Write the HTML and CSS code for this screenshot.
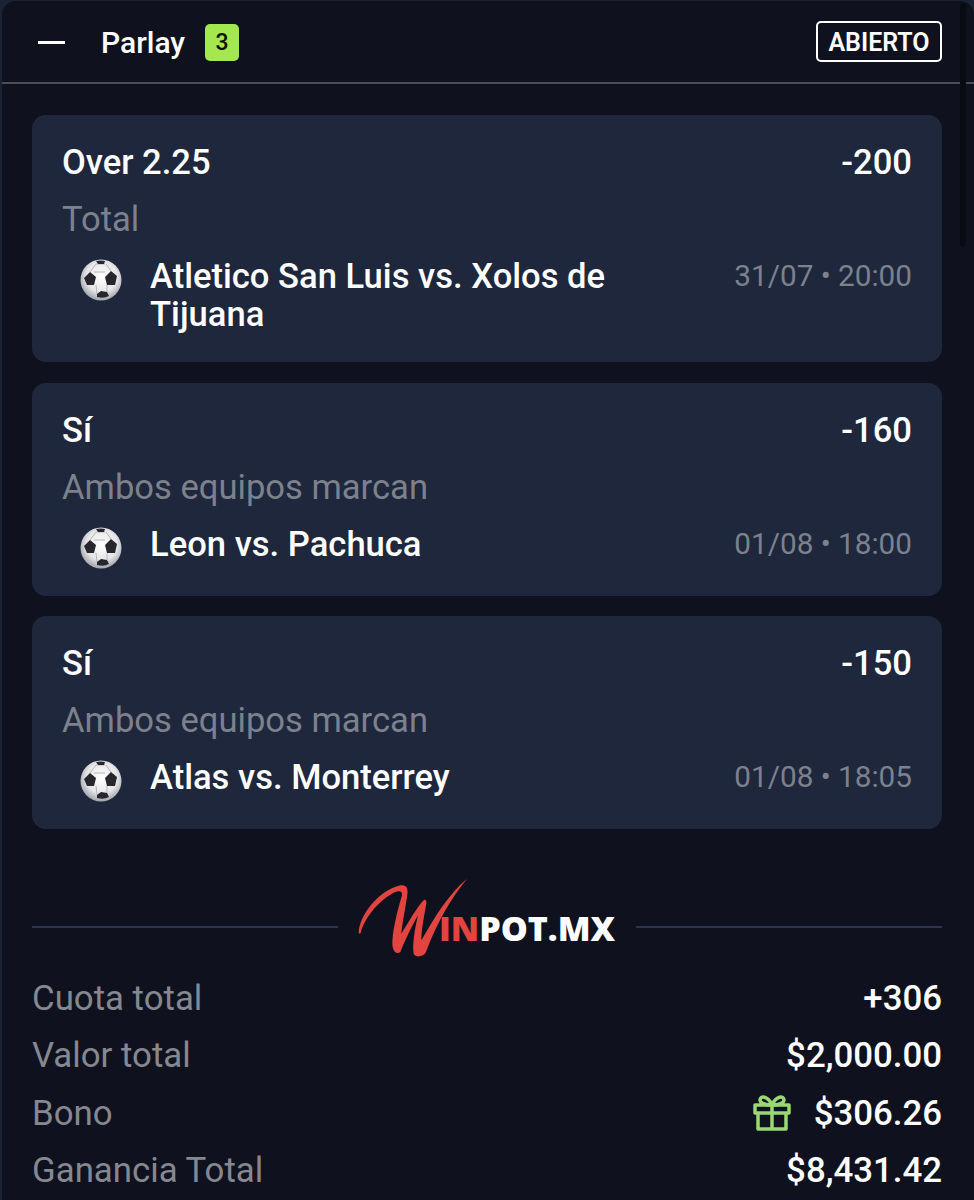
FILE: index.html
```html
<!DOCTYPE html>
<html lang="es">
<head>
  <meta charset="UTF-8" />
  <title>Parlay</title>
  <link rel="stylesheet" href="styles.css">
</head>
<body>
  <svg class="defs" width="0" height="0">
    <defs>
      <radialGradient id="ball-shade" cx="52%" cy="42%" r="58%">
        <stop offset="0" stop-color="#fff" />
        <stop offset="0.65" stop-color="#e6e6e8" />
        <stop offset="1" stop-color="#a2a4ab" />
      </radialGradient>
      <symbol id="ball" viewBox="0 0 42 42">
        <circle cx="21" cy="21" r="20.500" fill="url(#ball-shade)" />
        <path d="M16 5l-6 8M26 5l5 7M16 26l1 9M27 26l0 7M16 5h9M14 13h11" fill="none" stroke="#b4b6bc" stroke-width="1" />
        <path d="M10 13l6 5-2 8H7l-3-7zM31 12l6 5-2 9h-8l-2-8zM17 35l4-3 6 1 2 4q-5 3-12 1zM16 2q5-1 9 0l-1 3h-6z" fill="#26262c" />
      </symbol>
    </defs>
  </svg>

  <div class="panel">
    <div class="scrollbar"></div>

    <header class="panel-head">
      <span class="collapse"></span>
      <span class="panel-title">Parlay</span>
      <span class="count">3</span>
      <span class="status">ABIERTO</span>
    </header>

    <div class="bets">
      <div class="bet">
        <div class="bet-top"><span>Over 2.25</span><span>-200</span></div>
        <div class="market">Total</div>
        <div class="game">
          <svg class="ball"><use href="#ball" /></svg>
          <div class="teams">Atletico San Luis vs. Xolos de Tijuana</div>
          <div class="date">31/07 • 20:00</div>
        </div>
      </div>

      <div class="bet">
        <div class="bet-top"><span>Sí</span><span>-160</span></div>
        <div class="market">Ambos equipos marcan</div>
        <div class="game">
          <svg class="ball"><use href="#ball" /></svg>
          <div class="teams">Leon vs. Pachuca</div>
          <div class="date">01/08 • 18:00</div>
        </div>
      </div>

      <div class="bet">
        <div class="bet-top"><span>Sí</span><span>-150</span></div>
        <div class="market">Ambos equipos marcan</div>
        <div class="game">
          <svg class="ball"><use href="#ball" /></svg>
          <div class="teams">Atlas vs. Monterrey</div>
          <div class="date">01/08 • 18:05</div>
        </div>
      </div>
    </div>

    <div class="brand">
      <span class="rule"></span>
      <div class="logo">
        <svg class="swash" width="120" height="90" viewBox="0 0 360 270">
          <path d="M20 182C22 130 80 55 145 40c20-3 25 10 20 35-7 45-15 85-17 110 22-35 47-80 67-100 7-5 10 3 7 15-7 40-14 75-14 105 37-65 82-140 137-185-45 55-90 130-123 220-7 15-32 18-37 5-5-30 5-80 13-115-23 40-43 85-53 110-10 8-20 0-23-15-4-35 13-105 28-155 2-15-10-15-25-8C90 80 45 125 28 175c-1 10-6 13-8 7z" fill="#e2443f" />
        </svg>
        <span class="logo-in">IN</span><span class="logo-pot">POT.MX</span>
      </div>
      <span class="rule"></span>
    </div>

    <div class="totals">
      <div class="total-row"><span class="total-label">Cuota total</span><span>+306</span></div>
      <div class="total-row"><span class="total-label">Valor total</span><span>$2,000.00</span></div>
      <div class="total-row">
        <span class="total-label">Bono</span>
        <span class="bonus">
          <svg class="gift" width="38" height="38" viewBox="0 0 38 38" fill="none" stroke="#9bd873" stroke-width="3.500" stroke-linejoin="round">
            <rect x="2" y="11" width="34" height="8" />
            <path d="M5 19v16h28V19M19 11v24" />
            <path d="M19 11c-4-9-12-10-12-5 0 3 5 5 12 5zM19 11c4-9 12-10 12-5 0 3-5 5-12 5z" />
          </svg>
          <span>$306.26</span>
        </span>
      </div>
      <div class="total-row"><span class="total-label">Ganancia Total</span><span>$8,431.42</span></div>
    </div>
  </div>
</body>
</html>
```

FILE: styles.css
```css
* {
  margin: 0;
  padding: 0;
  box-sizing: border-box;
}

html, body {
  height: 1200px;
  overflow: hidden;
}

body {
  background: #1b2233;
  color: #fff;
  font-family: Roboto, "Liberation Sans", sans-serif;
}

.defs {
  position: absolute;
}

.panel {
  position: relative;
  height: 1200px;
  margin: 1px 0 0 2px;
  background: #0f121e;
  border-radius: 14px 14px 0 0;
}

.scrollbar {
  position: absolute;
  top: 2px;
  right: 8px;
  width: 6px;
  height: 244px;
  border-radius: 3px;
  background: #090b13;
}

.panel-head {
  display: flex;
  align-items: center;
  height: 83px;
  padding: 2px 32px 0 36px;
  border-bottom: 2px solid #4c4e57;
}

.collapse {
  width: 27px;
  height: 3px;
  background: #fff;
}

.panel-title {
  margin-left: 36px;
  font-size: 30px;
  font-weight: 500;
}

.count {
  width: 34px;
  height: 37px;
  margin-left: 20px;
  border-radius: 5px;
  background: #a3e84f;
  color: #0c1208;
  font-size: 23px;
  font-weight: 500;
  line-height: 37px;
  text-align: center;
}

.status {
  margin: -2px 0 0 auto;
  width: 126px;
  height: 41px;
  border: 2px solid #fff;
  border-radius: 5px;
  font-size: 25px;
  font-weight: 600;
  line-height: 39px;
  text-align: center;
}

.bets {
  display: flex;
  flex-direction: column;
  gap: 20.500px;
  padding: 31px 32px 0 30px;
}

.bet {
  padding: 28px 30px 29px;
  border-radius: 14px;
  background: #1e273c;
  font-size: 34.600px;
  font-weight: 500;
  line-height: 38px;
}

.bet-top {
  display: flex;
  justify-content: space-between;
}

.market {
  margin-top: 19px;
  color: #7d818d;
  font-weight: 400;
}

.game {
  display: flex;
  min-height: 42px;
  margin-top: 19px;
}

.ball {
  flex: none;
  width: 42px;
  height: 42px;
  margin: 2px 0 -2px 18px;
}

.teams {
  width: 490px;
  margin-left: 28px;
}

.date {
  margin-left: auto;
  color: #7d818d;
  font-size: 29.700px;
  font-weight: 400;
}

.brand {
  display: flex;
  align-items: center;
  gap: 20px;
  height: 100px;
  margin-top: 48px;
  padding: 0 32px 0 30px;
}

.rule {
  flex: 1;
  height: 2px;
  background: #2c3650;
}

.logo {
  position: relative;
  display: flex;
  align-items: baseline;
  width: 258px;
  padding: 2px 0 0 81px;
  font-family: "Open Sans", sans-serif;
  font-size: 34px;
  font-weight: 800;
  line-height: 44px;
}

.swash {
  position: absolute;
  left: -6px;
  top: -32px;
}

.logo-in {
  color: #e2443f;
}

.totals {
  padding: 0 32px 0 30px;
  margin-top: -8px;
}

.total-row {
  display: flex;
  justify-content: space-between;
  align-items: center;
  height: 57.500px;
  font-size: 34.800px;
  font-weight: 500;
}

.total-label {
  color: #868890;
  font-weight: 400;
}

.bonus {
  display: flex;
  align-items: center;
  gap: 23px;
}
```
